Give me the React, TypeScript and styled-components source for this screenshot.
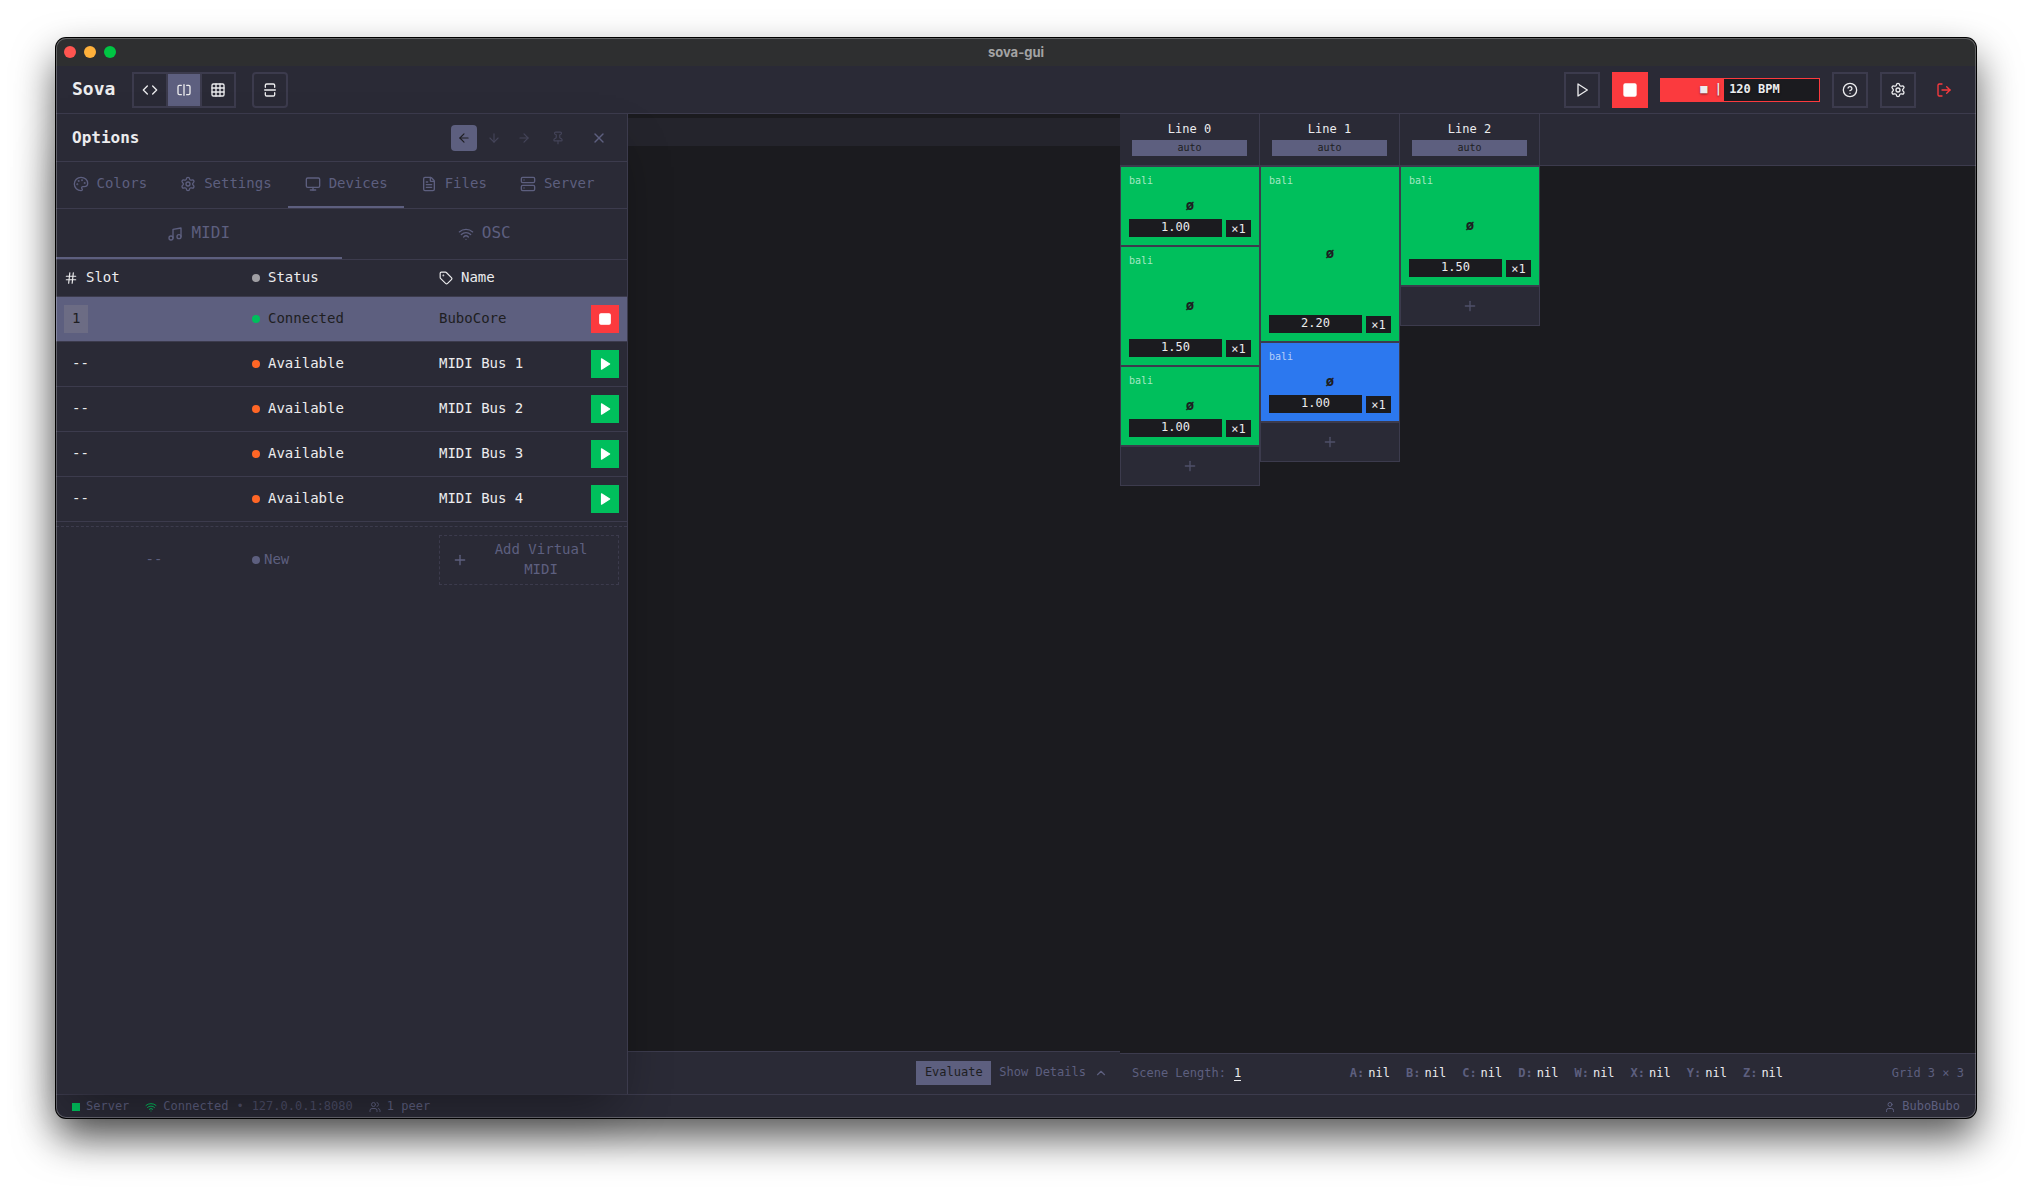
import React from "react";
import styled, { createGlobalStyle, css } from "styled-components";
import {
  ArrowDown,
  ArrowLeft,
  ArrowRight,
  ChevronUp,
  CircleQuestionMark,
  Code,
  FileText,
  Grid3x3,
  Hash,
  LogOut,
  Monitor,
  Music,
  Palette,
  Pin,
  Plus,
  Server,
  Settings,
  Square,
  SquareSplitHorizontal,
  SquareSplitVertical,
  Tag,
  User,
  Users,
  Wifi,
  X,
} from "lucide-react";

const color = {
  background: "#1b1b1f",
  surface: "#2a2a36",
  activeLine: "#24242c",
  border: "#3c3b4d",
  primary: "#5d5f7f",
  text: "#ececee",
  ink: "#1e1e22",
  green: "#00bf5c",
  red: "#fb3a3e",
  blue: "#2c78ef",
  orange: "#ff6626",
};

const mono = `"DejaVu Sans Mono", "Liberation Mono", monospace`;

const GlobalStyle = createGlobalStyle`
  *, *::before, *::after { box-sizing: border-box; }
  body { margin: 0; background: #ffffff; }
  button, input {
    margin: 0;
    padding: 0;
    border: 0;
    border-radius: 0;
    background: none;
    color: inherit;
    font: inherit;
  }
  button { cursor: pointer; }
  svg { display: block; flex: none; }
`;

/* Window frame */

const Desktop = styled.div`
  display: flex;
  min-height: 100vh;
  padding: 38px 56px 74px;
`;

const AppWindow = styled.div`
  position: relative;
  display: flex;
  flex: 1;
  flex-direction: column;
  min-width: 0;
  border-radius: 10px;
  background: ${color.surface};
  color: ${color.text};
  font: 14px/20px ${mono};
  box-shadow: 0 0 0 1px #000000, 0 20px 40px rgba(0, 0, 0, 0.66);

  &::after {
    content: "";
    position: absolute;
    inset: 0;
    z-index: 20;
    border-radius: 10px;
    box-shadow: inset 0 0 0 1px rgba(255, 255, 255, 0.25);
    pointer-events: none;
  }
`;

const TitleBar = styled.header`
  display: grid;
  grid-template-columns: 1fr auto 1fr;
  align-items: center;
  height: 28px;
  padding: 0 8px;
  border-radius: 10px 10px 0 0;
  background: #2e2f30;
`;

const Lights = styled.div`
  display: flex;
  gap: 8px;
`;

const Light = styled.button<{ $color: string }>`
  width: 12px;
  height: 12px;
  border-radius: 50%;
  background: ${(p) => p.$color};
`;

const WindowTitle = styled.span`
  color: #a3a3a4;
  font: 700 13px/16px Inter, sans-serif;
`;

/* Top toolbar */

const Toolbar = styled.div`
  display: flex;
  align-items: center;
  justify-content: space-between;
  padding: 6px 16px 5px;
  border-bottom: 1px solid ${color.border};
`;

const ToolGroup = styled.div<{ $gap: number }>`
  display: flex;
  align-items: center;
  gap: ${(p) => p.$gap}px;
`;

const Brand = styled.h1`
  margin: 0;
  min-width: 44px;
  padding-bottom: 2px;
  font-size: 18px;
  font-weight: 700;
  line-height: 24px;
`;

const Segments = styled.div`
  display: flex;
  gap: 2px;
  padding: 2px;
  background: ${color.border};
`;

const Segment = styled.button<{ $active?: boolean }>`
  display: grid;
  place-items: center;
  width: 32px;
  height: 32px;
  background: ${(p) => (p.$active ? color.primary : color.surface)};
`;

const ToolButton = styled.button<{ $variant?: "solid" | "rounded" }>`
  display: grid;
  place-items: center;
  width: 36px;
  height: 36px;
  border: 2px solid ${(p) => (p.$variant === "solid" ? color.red : color.border)};
  border-radius: ${(p) => (p.$variant === "rounded" ? 4 : 0)}px;
  background: ${(p) => (p.$variant === "solid" ? color.red : "transparent")};
`;

const ExitButton = styled.button`
  display: grid;
  place-items: center;
  width: 32px;
  height: 32px;
  color: ${color.red};
`;

const Tempo = styled.button`
  width: 160px;
  height: 24px;
  padding-bottom: 2px;
  border: 1px solid ${color.red};
  background: linear-gradient(to right, ${color.red} 40%, ${color.background} 40%);
  font-size: 12px;
  font-weight: 700;
  line-height: 20px;
  text-shadow: 0 1px 2px rgba(0, 0, 0, 0.5);
`;

/* Workspace */

const Workspace = styled.main`
  position: relative;
  z-index: 1;
  display: grid;
  flex: 1;
  grid-template-columns: minmax(0, 133fr) minmax(0, 107fr);
`;

const Pane = styled.section`
  display: flex;
  flex-direction: column;
  min-width: 0;
  background: ${color.background};
`;

const Editor = styled.div`
  flex: 1;
  padding-top: 4px;
`;

const ActiveLine = styled.div`
  height: 28px;
  background: ${color.activeLine};
`;

const EditorBar = styled.div`
  display: flex;
  align-items: center;
  justify-content: flex-end;
  gap: 8px;
  height: 43px;
  padding: 0 12px;
  border-top: 1px solid ${color.border};
  background: ${color.surface};
  font-size: 12px;
`;

const Evaluate = styled.button`
  min-width: 75px;
  height: 24px;
  padding: 0 8px 2px;
  background: ${color.primary};
  color: ${color.ink};
`;

const Details = styled.button`
  display: flex;
  align-items: center;
  gap: 8px;
  color: ${color.primary};
`;

/* Options drawer, floating over the editor */

const Drawer = styled.aside`
  position: absolute;
  top: 0;
  bottom: 0;
  left: 0;
  z-index: 10;
  width: 572px;
  border-right: 1px solid ${color.border};
  background: ${color.surface};
  box-shadow: 0 24px 48px -12px rgba(0, 0, 0, 0.35);
`;

const DrawerHeader = styled.div`
  display: flex;
  align-items: center;
  justify-content: space-between;
  height: 48px;
  padding: 0 16px;
  border-bottom: 1px solid ${color.border};
`;

const DrawerTitle = styled.h2`
  margin: 0;
  font-size: 16px;
  font-weight: 700;
  line-height: 24px;
`;

const DockButtons = styled.div`
  display: flex;
  gap: 4px;
`;

const DockButton = styled.button<{ $active?: boolean }>`
  padding: 6px;
  border-radius: 4px;
  background: ${(p) => (p.$active ? color.primary : "transparent")};
  color: ${(p) => (p.$active ? color.ink : "#444459")};
`;

const CloseButton = styled.button`
  margin-left: 8px;
  padding: 4px;
  color: ${color.primary};
`;

const Tabs = styled.div`
  display: flex;
  height: 47px;
  padding-right: 16px;
  border-bottom: 1px solid ${color.border};
`;

const tabBase = css<{ $active?: boolean }>`
  display: flex;
  align-items: center;
  justify-content: center;
  gap: 8px;
  border-bottom: 2px solid ${(p) => (p.$active ? color.primary : "transparent")};
  color: ${color.primary};
`;

const Tab = styled.button<{ $active?: boolean }>`
  ${tabBase}
  flex: 1 1 auto;
`;

const SubTabs = styled.div`
  display: grid;
  grid-template-columns: 1fr 1fr;
  height: 51px;
  border-bottom: 1px solid ${color.border};
`;

const SubTab = styled.button<{ $active?: boolean }>`
  ${tabBase}
  padding-top: 2px;
  font-size: 16px;
`;

/* Raises text slightly so its x-height lines up with the icon beside it. */
const Label = styled.span`
  padding-bottom: 2px;
`;

const DeviceTable = styled.table`
  width: 100%;
  border-spacing: 0;
  table-layout: fixed;

  th:nth-child(1) { width: 188px; }
  th:nth-child(2) { width: 187px; }
`;

const HeadCell = styled.th`
  height: 37px;
  padding: 0 8px;
  border-bottom: 1px solid ${color.border};
  font-weight: 400;
  text-align: left;
`;

const DeviceRow = styled.tr<{ $connected: boolean }>`
  background: ${(p) => (p.$connected ? color.primary : "transparent")};
  color: ${(p) => (p.$connected ? color.ink : color.text)};
`;

const Cell = styled.td`
  height: 45px;
  padding: 0 8px;
  border-bottom: 1px solid ${color.border};
`;

const Inline = styled.div<{ $gap?: number; $spread?: boolean }>`
  display: flex;
  align-items: center;
  justify-content: ${(p) => (p.$spread ? "space-between" : "flex-start")};
  gap: ${(p) => p.$gap ?? 8}px;
`;

const Dot = styled.span<{ $color: string }>`
  width: 8px;
  height: 8px;
  border-radius: 50%;
  background: ${(p) => p.$color};
`;

const Slot = styled.button<{ $assigned: boolean }>`
  display: block;
  height: 28px;
  padding: 0 8px 2px;
  background: ${(p) => (p.$assigned ? "#6c6c84" : "transparent")};
`;

const DeviceAction = styled.button<{ $stop: boolean }>`
  display: grid;
  place-items: center;
  width: 28px;
  height: 28px;
  background: ${(p) => (p.$stop ? color.red : color.green)};
  color: #ffffff;
`;

const NewDevice = styled.div`
  display: grid;
  grid-template-columns: 180px 179px 1fr;
  gap: 8px;
  align-items: center;
  margin-top: 4px;
  padding: 8px;
  border-top: 1px dashed ${color.border};
  color: ${color.primary};
`;

const NewSlot = styled.span`
  padding-bottom: 2px;
  text-align: center;
`;

const AddVirtual = styled.button`
  display: flex;
  align-items: center;
  gap: 8px;
  padding: 3px 12px;
  border: 1px dashed ${color.border};

  span { flex: 1; }
`;

/* Scene grid */

const SceneHeader = styled.div`
  display: flex;
  height: 52px;
  border-bottom: 1px solid ${color.border};
  background: ${color.surface};
`;

const LineHeader = styled.div`
  width: 140px;
  padding: 7px 12px 8px;
  border-right: 1px solid ${color.border};
  font-size: 12px;
  line-height: 16px;
  text-align: center;
`;

const LineLength = styled.button`
  display: block;
  width: 100%;
  height: 16px;
  margin-top: 3px;
  background: ${color.primary};
  color: ${color.ink};
  font-size: 10px;
  line-height: 16px;
`;

const Scene = styled.div`
  display: flex;
  flex: 1;
  align-items: flex-start;
`;

const Line = styled.div`
  width: 140px;
`;

const Clip = styled.div<{ $beats: number; $playing?: boolean }>`
  display: grid;
  grid-template-columns: minmax(0, 1fr);
  grid-template-rows: 18px 1fr 18px;
  height: ${(p) => p.$beats * 80}px;
  padding: 8px;
  border: 1px solid ${color.border};
  background: ${(p) => (p.$playing ? color.blue : color.green)};
`;

const ClipLang = styled.span`
  color: rgba(255, 255, 255, 0.65);
  font-size: 10px;
  line-height: 12px;
`;

const ClipName = styled.span`
  place-self: center;
  padding-bottom: 3px;
  color: ${color.ink};
  font-size: 14px;
  font-weight: 700;
  line-height: 16px;
`;

const ClipControls = styled.div`
  display: flex;
  align-items: flex-end;
  gap: 4px;
  font-size: 12px;
`;

const Duration = styled.input`
  flex: 1;
  min-width: 0;
  height: 18px;
  padding-bottom: 2px;
  background: ${color.background};
  text-align: center;
`;

const Repeats = styled.button`
  width: 25px;
  height: 17px;
  background: ${color.background};
  line-height: 16px;
`;

const AddClip = styled.button`
  display: grid;
  place-items: center;
  width: 100%;
  height: 40px;
  border: 1px solid ${color.border};
  background: ${color.surface};
  color: #4f5069;
`;

const SceneBar = styled.div`
  display: flex;
  align-items: center;
  justify-content: space-between;
  height: 41px;
  padding: 0 12px 2px;
  border-top: 1px solid ${color.border};
  background: ${color.surface};
  color: ${color.primary};
  font-size: 12px;
`;

const SceneLength = styled.button`
  border-bottom: 1px solid ${color.text};
  color: ${color.text};
  line-height: 14px;
`;

const VarName = styled.span`
  font-weight: 700;
`;

const VarValue = styled.span`
  color: ${color.text};
`;

/* Status bar */

const StatusBar = styled.footer`
  display: flex;
  align-items: center;
  justify-content: space-between;
  height: 24px;
  padding: 0 16px;
  border-top: 1px solid ${color.border};
  border-radius: 0 0 10px 10px;
  color: ${color.primary};
  font-size: 12px;
  line-height: 16px;
`;

const ServerSquare = styled.span`
  width: 8px;
  height: 8px;
  background: ${color.green};
`;

const Address = styled(Label)`
  opacity: 0.7;
`;

const PlayIcon = ({ size, filled }: { size: number; filled?: boolean }) => (
  <svg
    width={size}
    height={size}
    viewBox="0 0 24 24"
    fill={filled ? "currentColor" : "none"}
    stroke="currentColor"
    strokeWidth={2}
    strokeLinecap="round"
    strokeLinejoin="round"
    aria-hidden="true"
  >
    <polygon points="6 3 20 12 6 21 6 3" />
  </svg>
);

const tabs = [
  { label: "Colors", Icon: Palette },
  { label: "Settings", Icon: Settings },
  { label: "Devices", Icon: Monitor },
  { label: "Files", Icon: FileText },
  { label: "Server", Icon: Server },
];

const devices = [
  { slot: "1", name: "BuboCore", connected: true },
  { slot: "--", name: "MIDI Bus 1", connected: false },
  { slot: "--", name: "MIDI Bus 2", connected: false },
  { slot: "--", name: "MIDI Bus 3", connected: false },
  { slot: "--", name: "MIDI Bus 4", connected: false },
];

const lines = [
  [{ beats: 1 }, { beats: 1.5 }, { beats: 1 }],
  [{ beats: 2.2 }, { beats: 1, playing: true }],
  [{ beats: 1.5 }],
];

const variables = ["A", "B", "C", "D", "W", "X", "Y", "Z"];

const OptionsDrawer = () => (
  <Drawer aria-label="Options">
    <DrawerHeader>
      <DrawerTitle>Options</DrawerTitle>
      <Inline>
        <DockButtons>
          <DockButton $active aria-label="Dock left"><ArrowLeft size={14} /></DockButton>
          <DockButton aria-label="Dock bottom"><ArrowDown size={14} /></DockButton>
          <DockButton aria-label="Dock right"><ArrowRight size={14} /></DockButton>
        </DockButtons>
        <DockButton aria-label="Pin"><Pin size={14} /></DockButton>
        <CloseButton aria-label="Close"><X size={16} /></CloseButton>
      </Inline>
    </DrawerHeader>
    <Tabs role="tablist">
      {tabs.map(({ label, Icon }) => (
        <Tab key={label} role="tab" aria-selected={label === "Devices"} $active={label === "Devices"}>
          <Icon size={16} />
          <Label>{label}</Label>
        </Tab>
      ))}
    </Tabs>
    <SubTabs role="tablist">
      <SubTab role="tab" aria-selected $active><Music size={16} /><Label>MIDI</Label></SubTab>
      <SubTab role="tab" aria-selected={false}><Wifi size={16} /><Label>OSC</Label></SubTab>
    </SubTabs>
    <DeviceTable>
      <thead>
        <tr>
          <HeadCell><Inline><Hash size={14} /><Label>Slot</Label></Inline></HeadCell>
          <HeadCell><Inline><Dot $color="#a09fa4" /><Label>Status</Label></Inline></HeadCell>
          <HeadCell><Inline><Tag size={14} /><Label>Name</Label></Inline></HeadCell>
        </tr>
      </thead>
      <tbody>
        {devices.map((d) => (
          <DeviceRow key={d.name} $connected={d.connected}>
            <Cell><Slot $assigned={d.connected}>{d.slot}</Slot></Cell>
            <Cell>
              <Inline>
                <Dot $color={d.connected ? color.green : color.orange} />
                <Label>{d.connected ? "Connected" : "Available"}</Label>
              </Inline>
            </Cell>
            <Cell>
              <Inline $spread>
                <Label>{d.name}</Label>
                <DeviceAction $stop={d.connected} aria-label={d.connected ? "Disconnect" : "Connect"}>
                  {d.connected ? <Square size={14} fill="currentColor" /> : <PlayIcon size={14} filled />}
                </DeviceAction>
              </Inline>
            </Cell>
          </DeviceRow>
        ))}
      </tbody>
    </DeviceTable>
    <NewDevice>
      <NewSlot>--</NewSlot>
      <Inline $gap={4}><Dot $color={color.primary} /><Label>New</Label></Inline>
      <AddVirtual><Plus size={16} /><Label>Add Virtual MIDI</Label></AddVirtual>
    </NewDevice>
  </Drawer>
);

const ScenePane = () => (
  <Pane>
    <SceneHeader>
      {lines.map((_, i) => (
        <LineHeader key={i}>
          Line {i}
          <LineLength>auto</LineLength>
        </LineHeader>
      ))}
    </SceneHeader>
    <Scene>
      {lines.map((clips, i) => (
        <Line key={i}>
          {clips.map((clip, j) => (
            <Clip key={j} $beats={clip.beats} $playing={"playing" in clip}>
              <ClipLang>bali</ClipLang>
              <ClipName>ø</ClipName>
              <ClipControls>
                <Duration aria-label="Duration" defaultValue={clip.beats.toFixed(2)} />
                <Repeats>×1</Repeats>
              </ClipControls>
            </Clip>
          ))}
          <AddClip aria-label="Add frame"><Plus size={16} /></AddClip>
        </Line>
      ))}
    </Scene>
    <SceneBar>
      <Inline>Scene Length:<SceneLength>1</SceneLength></Inline>
      <Inline $gap={16}>
        {variables.map((v) => (
          <Inline key={v} $gap={4}><VarName>{v}:</VarName><VarValue>nil</VarValue></Inline>
        ))}
      </Inline>
      <span>Grid 3 × 3</span>
    </SceneBar>
  </Pane>
);

export default function App() {
  return (
    <>
      <GlobalStyle />
      <Desktop>
        <AppWindow>
          <TitleBar>
            <Lights>
              <Light $color="#ff5550" aria-label="Close window" />
              <Light $color="#ffb13b" aria-label="Minimise window" />
              <Light $color="#00c543" aria-label="Zoom window" />
            </Lights>
            <WindowTitle>sova-gui</WindowTitle>
          </TitleBar>
          <Toolbar>
            <ToolGroup $gap={16}>
              <Brand>Sova</Brand>
              <Segments>
                <Segment aria-label="Editor view"><Code size={16} /></Segment>
                <Segment $active aria-label="Split view"><SquareSplitHorizontal size={16} /></Segment>
                <Segment aria-label="Grid view"><Grid3x3 size={16} /></Segment>
              </Segments>
              <ToolButton $variant="rounded" aria-label="Split direction"><SquareSplitVertical size={16} /></ToolButton>
            </ToolGroup>
            <ToolGroup $gap={12}>
              <ToolButton aria-label="Play"><PlayIcon size={16} /></ToolButton>
              <ToolButton $variant="solid" aria-label="Stop"><Square size={16} color="#ffffff" fill="#ffffff" /></ToolButton>
              <Tempo>■ | 120 BPM</Tempo>
              <ToolButton aria-label="Help"><CircleQuestionMark size={16} /></ToolButton>
              <ToolButton aria-label="Settings"><Settings size={16} /></ToolButton>
              <ExitButton aria-label="Disconnect"><LogOut size={16} /></ExitButton>
            </ToolGroup>
          </Toolbar>
          <Workspace>
            <Pane>
              <Editor><ActiveLine /></Editor>
              <EditorBar>
                <Evaluate>Evaluate</Evaluate>
                <Details><Label>Show Details</Label><ChevronUp size={14} /></Details>
              </EditorBar>
            </Pane>
            <ScenePane />
            <OptionsDrawer />
          </Workspace>
          <StatusBar>
            <Inline $gap={16}>
              <Inline $gap={6}><ServerSquare /><Label>Server</Label></Inline>
              <Inline>
                <Inline $gap={6}><Wifi size={12} color={color.green} /><Label>Connected</Label></Inline>
                <Address>•</Address>
                <Address>127.0.0.1:8080</Address>
              </Inline>
              <Inline $gap={6}><Users size={12} /><Label>1 peer</Label></Inline>
            </Inline>
            <Inline $gap={6}><User size={12} /><Label>BuboBubo</Label></Inline>
          </StatusBar>
        </AppWindow>
      </Desktop>
    </>
  );
}
